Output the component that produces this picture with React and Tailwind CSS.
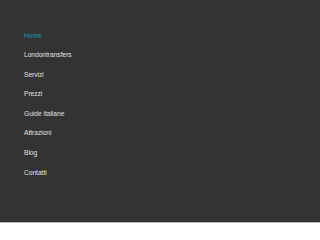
import React from 'react';

const items = ['Home', 'Londontransfers', 'Servizi', 'Prezzi', 'Guide italiane', 'Attrazioni', 'Blog', 'Contatti'];

const App = () => {
    return (
        <div className="w-[320px] h-[240px] bg-white font-['Liberation_Sans',Arial,sans-serif]">
            <nav className="h-[222px] bg-[#333333] border-b border-[#b5b5b5] box-content">
                <ul className="pt-[25.5px] pl-[24px]">
                    {items.map((item, i) => (
                        <li key={item} className="h-[19.6px] leading-[19.6px] text-[6.6px]">
                            <a href="#" className={i === 0 ? 'text-[#1b98bb]' : 'text-[#e2e2e2]'}>{item}</a>
                        </li>
                    ))}
                </ul>
            </nav>
        </div>
    );
};

export default App;
